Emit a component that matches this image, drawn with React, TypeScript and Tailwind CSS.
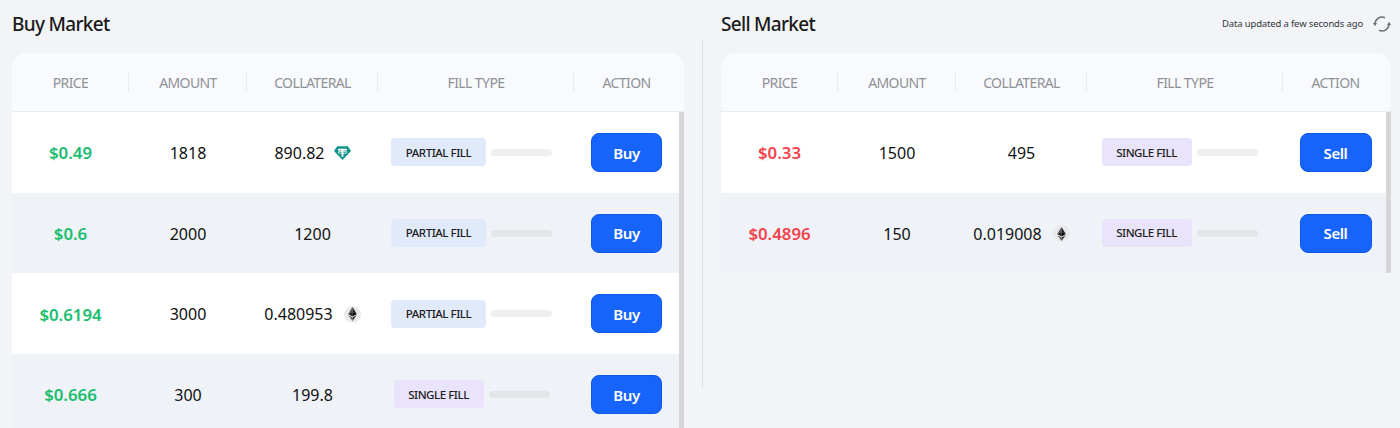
const GRID = "grid grid-cols-[117px_118px_131px_196px_105px]";

type Coin = "usdt" | "eth" | null;
type Row = { price: string; amount: string; collateral: string; coin: Coin; fill: "PARTIAL FILL" | "SINGLE FILL" };

const buyRows: Row[] = [
  { price: "$0.49", amount: "1818", collateral: "890.82", coin: "usdt", fill: "PARTIAL FILL" },
  { price: "$0.6", amount: "2000", collateral: "1200", coin: null, fill: "PARTIAL FILL" },
  { price: "$0.6194", amount: "3000", collateral: "0.480953", coin: "eth", fill: "PARTIAL FILL" },
  { price: "$0.666", amount: "300", collateral: "199.8", coin: null, fill: "SINGLE FILL" },
];

const sellRows: Row[] = [
  { price: "$0.33", amount: "1500", collateral: "495", coin: null, fill: "SINGLE FILL" },
  { price: "$0.4896", amount: "150", collateral: "0.019008", coin: "eth", fill: "SINGLE FILL" },
];

function TetherIcon() {
  return (
    <svg width="17" height="14" viewBox="0 0 17 14" className="ml-[9px] shrink-0" aria-hidden="true">
      <path d="M3.2 0.2h10.6L17 5 8.5 14 0 5z" fill="#0f9488" />
      <rect x="4" y="2.8" width="9" height="1.7" fill="#ffffff" />
      <rect x="7.6" y="2.8" width="1.8" height="8" fill="#ffffff" />
      <ellipse cx="8.5" cy="6.3" rx="4.6" ry="1.1" fill="none" stroke="#ffffff" strokeWidth="0.8" />
    </svg>
  );
}

function EthIcon() {
  return (
    <span className="ml-[11px] flex h-[17px] w-[17px] shrink-0 items-center justify-center rounded-full bg-[#e9eaec]">
      <svg width="9" height="14" viewBox="0 0 9 14" aria-hidden="true">
        <path d="M4.5 0L0.2 7 4.5 5z" fill="#555" />
        <path d="M4.5 0L8.8 7 4.5 5z" fill="#222" />
        <path d="M4.5 5L0.2 7l4.3 2.5z" fill="#222" />
        <path d="M4.5 5l4.3 2-4.3 2.5z" fill="#000" />
        <path d="M0.2 8l4.3 6V10.5z" fill="#666" />
        <path d="M8.8 8L4.5 14V10.5z" fill="#333" />
      </svg>
    </span>
  );
}

function RefreshIcon() {
  return (
    <svg width="18" height="18" viewBox="0 0 18 18" fill="none" className="ml-[10px]" aria-hidden="true">
      <path d="M2 9A7 7 0 0 1 12 2.7" stroke="#6b6f76" strokeWidth="1.5" />
      <path d="M16 9A7 7 0 0 1 6 15.3" stroke="#6b6f76" strokeWidth="1.5" />
      <path d="M0 8L4 8 2 11.2z" fill="#6b6f76" />
      <path d="M14 10L18 10 16 6.8z" fill="#6b6f76" />
    </svg>
  );
}

function HeaderCell({ label, last }: { label: string; last?: boolean }) {
  return (
    <div className="relative flex items-center justify-center text-[14px] tracking-[-0.6px] text-[#8e9196]">
      {label}
      {!last && <span className="absolute right-0 top-[19px] h-[20px] w-px bg-[#e8eaee]" />}
    </div>
  );
}

function MarketTable({ rows, side }: { rows: Row[]; side: "buy" | "sell" }) {
  const buy = side === "buy";
  return (
    <div className="flex min-h-0 flex-1 flex-col overflow-hidden rounded-t-[14px]">
      <div className={`${GRID} h-[59px] shrink-0 border-b border-[#e9ebef] bg-[#f9fafe]`}>
        <HeaderCell label="PRICE" />
        <HeaderCell label="AMOUNT" />
        <HeaderCell label="COLLATERAL" />
        <HeaderCell label="FILL TYPE" />
        <HeaderCell label="ACTION" last />
      </div>
      <div className="relative">
        {rows.map((r, i) => (
          <div key={r.price} className={`${GRID} h-[80.7px] ${i % 2 ? "bg-[#eff2f7]" : "bg-white"}`}>
            <div className={`flex items-center justify-center pt-[1px] text-[16.8px] font-semibold ${buy ? "text-[#1cbd6f]" : "text-[#f5424d]"}`}>
              {r.price}
            </div>
            <div className="flex items-center justify-center pt-[1px] text-[16px] text-[#111]">{r.amount}</div>
            <div className="flex items-center justify-center pt-[1px] text-[16px] text-[#111]">
              {r.collateral}
              {r.coin === "usdt" && <TetherIcon />}
              {r.coin === "eth" && <EthIcon />}
            </div>
            <div className={`flex items-center justify-center ${buy ? "pr-[9px]" : "pr-[11px]"}`}>
              <span
                className={`flex h-[28px] items-center justify-center rounded-[4px] text-[11.5px] tracking-[-0.45px] font-medium text-[#1c1c22] ${
                  r.fill === "PARTIAL FILL" ? "w-[95px] bg-[#e1eafb]" : "w-[90px] bg-[#e9e3fb]"
                }`}
              >
                {r.fill}
              </span>
              <span className={`ml-[5px] h-[7px] w-[61px] rounded-full ${i % 2 ? "bg-[#e3e5e9]" : "bg-[#efefef]"}`} />
            </div>
            <div className="flex items-center justify-center">
              <button className={`h-[39px] rounded-[8px] border border-[#0e58e6] bg-[#1764fd] pt-[1px] text-[15px] font-semibold tracking-[-0.4px] text-white ${buy ? "w-[71px]" : "w-[72px]"}`}>
                {buy ? "Buy" : "Sell"}
              </button>
            </div>
          </div>
        ))}
        <div className="absolute bottom-0 right-0 top-0 w-[5px] bg-[#d6d6d6]" />
      </div>
    </div>
  );
}

export default function App() {
  return (
    <div className="flex h-[428px] w-[1400px] overflow-hidden bg-[#f2f4f8] font-['Noto_Sans',sans-serif]">
      <section className="flex h-full w-[684px] shrink-0 flex-col pl-[12px]">
        <div className="flex h-[53px] shrink-0 items-start pt-[11px]">
          <h2 className="text-[19px] font-medium leading-[27px] tracking-[-0.7px] text-[#1a1a1a]">Buy Market</h2>
        </div>
        <MarketTable rows={buyRows} side="buy" />
      </section>

      <div className="ml-[18px] mt-[40px] h-[348px] w-px shrink-0 bg-[#dcdee2]" />

      <section className="ml-[18px] flex h-full w-[670px] shrink-0 flex-col">
        <div className="flex h-[53px] shrink-0 items-start justify-between pt-[11px]">
          <h2 className="text-[19px] font-medium leading-[27px] tracking-[-0.7px] text-[#1a1a1a]">Sell Market</h2>
          <div className="flex items-center pt-[4px] text-[9.5px] tracking-[-0.15px] text-[#33363b]">
            Data updated a few seconds ago
            <RefreshIcon />
          </div>
        </div>
        <MarketTable rows={sellRows} side="sell" />
      </section>
    </div>
  );
}
